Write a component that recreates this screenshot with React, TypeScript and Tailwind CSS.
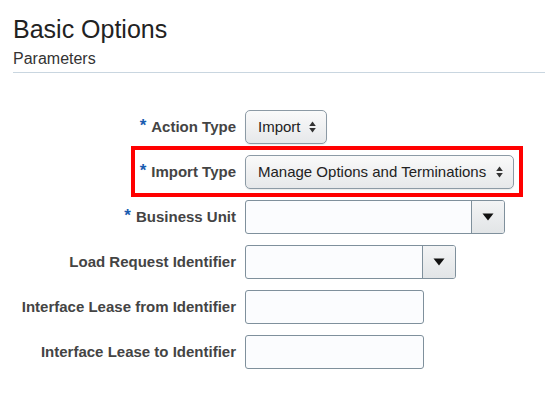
import React from "react";

const font = { fontFamily: '"Liberation Sans", Arial, sans-serif' };

const UpDown = () => (
  <svg width="7" height="12" viewBox="0 0 7 12" className="shrink-0">
    <path d="M3.5 0.5 L6.8 5 L0.2 5 Z" fill="#333" />
    <path d="M3.5 11.5 L6.8 7 L0.2 7 Z" fill="#333" />
  </svg>
);

const Caret = () => (
  <svg width="12" height="8" viewBox="0 0 12 8">
    <path d="M0.5 0.5 L11.5 0.5 L6 7.5 Z" fill="#111" />
  </svg>
);

const Label = ({ text, req }: { text: string; req?: boolean }) => (
  <div className="text-right text-[15px] font-bold text-[#444] whitespace-nowrap">
    {req && <span className="text-[17px] text-[#1a5cb0] mr-[5px] relative -top-[1px]">*</span>}
    {text}
  </div>
);

const Select = ({ value, w }: { value: string; w: string }) => (
  <div
    className={`${w} h-[34px] flex items-center justify-between pl-[12px] pr-[10px] rounded-[5px] border border-[#8c9aa5] bg-gradient-to-b from-[#fafafa] to-[#e6e8ea] text-[15px] text-[#222] shadow-[0_1px_1px_rgba(0,0,0,0.08)]`}
  >
    <span>{value}</span>
    <UpDown />
  </div>
);

const Combo = ({ w }: { w: string }) => (
  <div className={`${w} h-[34px] flex rounded-[3px] border border-[#7f909c] bg-[#fbfcfe] overflow-hidden`}>
    <div className="flex-1" />
    <div className="w-[33px] border-l border-[#7f909c] bg-gradient-to-b from-[#f3f4f5] to-[#e2e5e7] flex items-center justify-center">
      <Caret />
    </div>
  </div>
);

const Input = () => (
  <div className="w-[179px] h-[34px] rounded-[3px] border border-[#7f909c] bg-[#fbfcfe]" />
);

const Row = ({ children, label, req, cls }: { children: React.ReactNode; label: string; req?: boolean; cls: string }) => (
  <div className={`flex items-center h-[34px] ${cls}`}>
    <div className="w-[236px] shrink-0">
      <Label text={label} req={req} />
    </div>
    <div className="ml-[9px]">{children}</div>
  </div>
);

export default function App() {
  return (
    <div className="w-[545px] h-[394px] bg-white overflow-hidden" style={font}>
      <div className="ml-[13px] pt-[14px]">
        <h1 className="text-[25px] leading-[30px] text-[#222]">Basic Options</h1>
        <div className="mt-[5px] pb-[3px] text-[16px] leading-[20px] text-[#333] border-b border-[#c9d6e0]">
          Parameters
        </div>
      </div>

      <Row label="Action Type" req cls="mt-[37px]">
        <Select value="Import" w="w-[82px]" />
      </Row>

      <div className="mt-[2px] ml-[131px] w-[392px] h-[51px] border-4 border-[#ff0000] flex items-center">
        <div className="w-[101px] shrink-0 flex justify-end">
          <Label text="Import Type" req />
        </div>
        <div className="ml-[9px] mt-[1px]">
          <Select value="Manage Options and Terminations" w="w-[269px]" />
        </div>
      </div>

      <Row label="Business Unit" req cls="mt-[3px]">
        <Combo w="w-[260px]" />
      </Row>

      <Row label="Load Request Identifier" cls="mt-[11px]">
        <Combo w="w-[211px]" />
      </Row>

      <Row label="Interface Lease from Identifier" cls="mt-[11px]">
        <Input />
      </Row>

      <Row label="Interface Lease to Identifier" cls="mt-[11px]">
        <Input />
      </Row>
    </div>
  );
}
